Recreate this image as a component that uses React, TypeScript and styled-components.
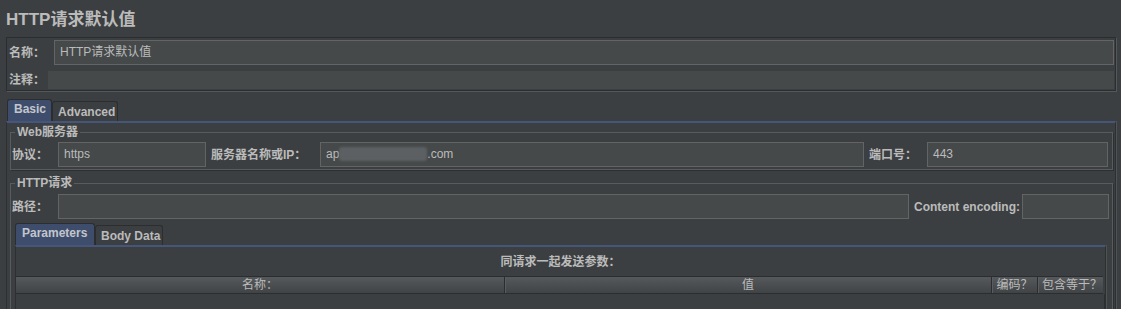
import styled, { createGlobalStyle } from "styled-components"

const GlobalStyle = createGlobalStyle`
  html, body {
    margin: 0;
    padding: 0;
    background: #3c3f41;
  }
  body {
    font-family: "Liberation Sans", "Noto Sans CJK SC", sans-serif;
    font-size: 12px;
    color: #bbbbbb;
    overflow: hidden;
  }
  * {
    box-sizing: border-box;
  }
`

const Page = styled.div`
  width: 1121px;
  height: 309px;
  overflow: hidden;
  padding: 0 5px 0 6px;
`

const Title = styled.h1`
  margin: 0;
  padding-top: 10px;
  font-size: 17px;
  line-height: 20px;
  font-weight: bold;
  color: #bbbbbb;
`

const InfoPanel = styled.div`
  margin-top: 7px;
  border: 1px solid #2b2d2e;
  box-shadow: 1px 1px 0 #55585a;
  padding: 2px 1px 1px 1px;
`

const FormRow = styled.div<{ gapTop?: number }>`
  display: flex;
  align-items: center;
  margin-top: ${(p) => p.gapTop ?? 0}px;
`

const Label = styled.span<{ w: number; ml?: number }>`
  flex: none;
  width: ${(p) => p.w}px;
  margin-left: ${(p) => p.ml ?? 0}px;
  font-weight: bold;
  white-space: nowrap;
  line-height: 14px;
`

const TextField = styled.div<{ w?: number }>`
  ${(p) => (p.w ? `width: ${p.w}px; flex: none;` : "flex: 1;")}
  height: 25px;
  border: 1px solid #646464;
  background: #45494a;
  padding: 0 5px;
  line-height: 23px;
  white-space: nowrap;
  overflow: hidden;
`

const CommentField = styled.div`
  flex: 1;
  height: 18px;
  background: #45494a;
`

const Blurred = styled.span`
  display: inline-block;
  width: 88px;
  height: 14px;
  vertical-align: -3px;
  background: #5c6062;
  border-radius: 3px;
  filter: blur(1.2px);
`

const Tabs = styled.div<{ mt: number; mx?: number }>`
  margin: ${(p) => p.mt}px ${(p) => p.mx ?? 0}px 0 ${(p) => p.mx ?? 0}px;
`

const TabStrip = styled.div<{ pl?: number }>`
  display: flex;
  align-items: flex-end;
  height: 22px;
  padding-left: ${(p) => p.pl ?? 0}px;
`

const Tab = styled.div<{ active?: boolean; w: number }>`
  width: ${(p) => p.w}px;
  height: ${(p) => (p.active ? 22 : 20)}px;
  padding-left: ${(p) => (p.active ? 6 : 5)}px;
  line-height: ${(p) => (p.active ? 19 : 20)}px;
  font-weight: bold;
  color: ${(p) => (p.active ? "#c2c6cc" : "#bbbbbb")};
  background: ${(p) => (p.active ? "#3f4d6c" : "#3c3f41")};
  border: 1px solid #2b2d2e;
  border-bottom: none;
  border-radius: 3px 3px 0 0;
  white-space: nowrap;
`

const TabPanel = styled.div<{ pad: string }>`
  border-top: 2px solid #46567a;
  border-left: 1px solid #2d2f30;
  border-right: 1px solid #2d2f30;
  box-shadow: 1px 0 0 #505355;
  padding: ${(p) => p.pad};
`

const Group = styled.fieldset<{ mt?: number; pad: string }>`
  margin: ${(p) => p.mt ?? 0}px 0 0 0;
  padding: ${(p) => p.pad};
  border: 1px solid #595c5e;
  box-shadow: 1px 1px 0 #2d2f30;
  min-inline-size: 0;
`

const Legend = styled.legend`
  margin-left: 3px;
  padding: 0 2px;
  font-weight: bold;
  line-height: 18px;
`

const Caption = styled.div`
  padding: 8px 0 7px;
  line-height: 14px;
  font-weight: bold;
  text-align: center;
`

const HeaderRow = styled.div`
  display: flex;
  height: 18px;
  margin-right: 2px;
  border-top: 1px solid #2b2d2e;
  border-bottom: 1px solid #2b2d2e;
  background: linear-gradient(#55595b, #414446);
`

const HeaderCell = styled.div<{ w: number; first?: boolean }>`
  flex: none;
  width: ${(p) => p.w}px;
  line-height: 16px;
  text-align: center;
  white-space: nowrap;
  border-left: ${(p) => (p.first ? "none" : "1px solid #2b2d2e")};
  box-shadow: ${(p) => (p.first ? "none" : "inset 1px 0 0 #595d5f")};
`

const TableBody = styled.div`
  height: 60px;
  border-right: 1px solid #2d2f30;
`

export default function App() {
  return (
    <>
      <GlobalStyle />
      <Page>
        <Title>HTTP请求默认值</Title>
        <InfoPanel>
          <FormRow>
            <Label w={45} ml={1}>名称：</Label>
            <TextField>HTTP请求默认值</TextField>
          </FormRow>
          <FormRow gapTop={6}>
            <Label w={39} ml={1}>注释：</Label>
            <CommentField />
          </FormRow>
        </InfoPanel>

        <Tabs mt={8}>
          <TabStrip pl={1}>
            <Tab active w={45}>Basic</Tab>
            <Tab w={66}>Advanced</Tab>
          </TabStrip>
          <TabPanel pad="0 2px 0 3px">
            <Group pad="1px 4px 2px 1px">
              <Legend>Web服务器</Legend>
              <FormRow>
                <Label w={46}>协议：</Label>
                <TextField w={148}>https</TextField>
                <Label w={109} ml={5}>服务器名称或IP：</Label>
                <TextField>
                  ap<Blurred />.com
                </TextField>
                <Label w={58} ml={5}>端口号：</Label>
                <TextField w={181}>443</TextField>
              </FormRow>
            </Group>

            <Group mt={4} pad="2px 3px 0 1px">
              <Legend>HTTP请求</Legend>
              <FormRow>
                <Label w={46}>路径：</Label>
                <TextField />
                <Label w={108} ml={5}>Content encoding:</Label>
                <TextField w={87} />
              </FormRow>
              <Tabs mt={4} mx={3}>
                <TabStrip>
                  <Tab active w={80}>Parameters</Tab>
                  <Tab w={68}>Body Data</Tab>
                </TabStrip>
                <TabPanel pad="0">
                  <Caption>同请求一起发送参数：</Caption>
                  <HeaderRow>
                    <HeaderCell w={488} first>名称：</HeaderCell>
                    <HeaderCell w={487}>值</HeaderCell>
                    <HeaderCell w={46}>编码？</HeaderCell>
                    <HeaderCell w={69}>包含等于？</HeaderCell>
                  </HeaderRow>
                  <TableBody />
                </TabPanel>
              </Tabs>
            </Group>
          </TabPanel>
        </Tabs>
      </Page>
    </>
  )
}
